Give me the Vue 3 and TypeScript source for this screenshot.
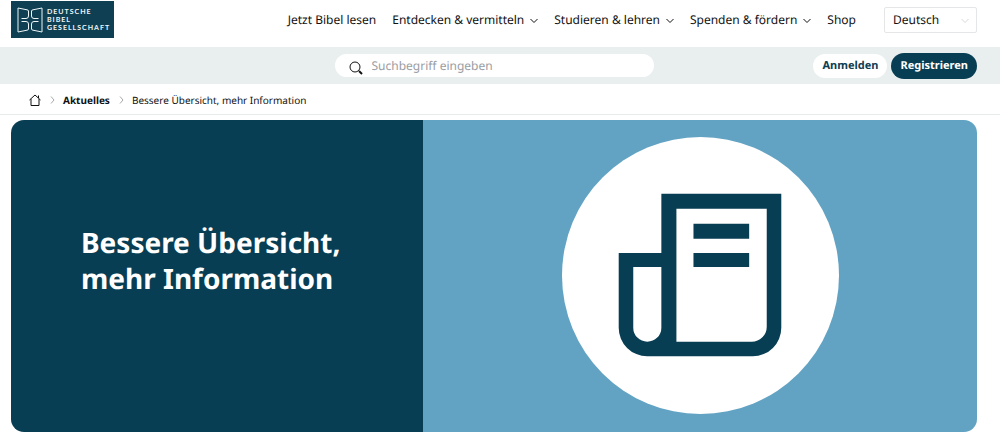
<script setup lang="ts">
import { ref } from 'vue'

interface NavItem {
  label: string
  hasMenu: boolean
}

const navItems: NavItem[] = [
  { label: 'Jetzt Bibel lesen', hasMenu: false },
  { label: 'Entdecken & vermitteln', hasMenu: true },
  { label: 'Studieren & lehren', hasMenu: true },
  { label: 'Spenden & fördern', hasMenu: true },
  { label: 'Shop', hasMenu: false },
]

const language = ref('Deutsch')
const query = ref('')
</script>

<template>
  <div class="page">
    <header class="header">
      <a href="#" class="logo">
        <svg class="logo-mark" viewBox="0 0 26 26" aria-hidden="true">
          <path d="M4.500 11.500H9q2.500 0 2.500-2.500V4q0-1-1.500-1.200L1 1v24l9-1.800q1.500-.2 1.500-1.200v-5q0-2.500-2.500-2.500H4.500" />
          <path d="M21.500 11.500H17q-2.500 0-2.500-2.500V4q0-1 1.500-1.200L25 1v24l-9-1.800q-1.500-.2-1.500-1.200v-5q0-2.500 2.500-2.500h4.500" />
        </svg>
        <span class="logo-text">
          <span>DEUTSCHE</span>
          <span>BIBEL</span>
          <span>GESELLSCHAFT</span>
        </span>
      </a>
      <nav class="nav" aria-label="Hauptnavigation">
        <template v-for="item in navItems" :key="item.label">
          <button v-if="item.hasMenu" type="button" class="nav-item">
            {{ item.label }}
            <svg class="nav-chevron" viewBox="0 0 8 6" aria-hidden="true"><path d="M.5 1 4 4.500 7.500 1" /></svg>
          </button>
          <a v-else href="#" class="nav-item">{{ item.label }}</a>
        </template>
      </nav>
      <div class="language">
        <select v-model="language" aria-label="Sprache">
          <option>Deutsch</option>
          <option>English</option>
        </select>
        <svg class="language-chevron" viewBox="0 0 8 6" aria-hidden="true"><path d="M.5 1 4 4.500 7.500 1" /></svg>
      </div>
    </header>

    <div class="toolbar">
      <form class="search" role="search" @submit.prevent>
        <svg class="search-icon" viewBox="0 0 14 14" aria-hidden="true">
          <circle cx="6" cy="6" r="5" />
          <path d="m9.500 9.500 1 1" />
          <path class="handle" d="m10 10 3 3" />
        </svg>
        <input v-model="query" type="search" placeholder="Suchbegriff eingeben" aria-label="Suchbegriff eingeben" />
      </form>
      <div class="account">
        <button type="button" class="login">Anmelden</button>
        <button type="button" class="register">Registrieren</button>
      </div>
    </div>

    <nav class="crumbs" aria-label="Brotkrumen">
      <a href="#" class="home" aria-label="Startseite">
        <svg viewBox="0 0 12 12" aria-hidden="true">
          <path d="M.5 6 6 1l5.500 5M2 5v6.500h8V5M9.500 4V1.500" />
        </svg>
      </a>
      <svg class="separator" viewBox="0 0 5 8" aria-hidden="true"><path d="m1 .5 3 3.500-3 3.500" /></svg>
      <a href="#" class="parent">Aktuelles</a>
      <svg class="separator" viewBox="0 0 5 8" aria-hidden="true"><path d="m1 .5 3 3.500-3 3.500" /></svg>
      <span aria-current="page">Bessere Übersicht, mehr Information</span>
    </nav>

    <main class="hero">
      <div class="hero-text">
        <h1>Bessere Übersicht,<br />mehr Information</h1>
      </div>
      <div class="hero-art">
        <svg viewBox="0 0 276 276" aria-hidden="true">
          <circle cx="138" cy="138" r="138" fill="#fff" />
          <path
            fill="#083e53"
            fill-rule="evenodd"
            d="M99 56.500h119.500V190a28.500 28.500 0 0 1-28.500 28.500H85A28.500 28.500 0 0 1 56.500 190V115.500H99ZM114 71.500V204h75a15 15 0 0 0 15-15V71.500ZM71 129.500V190a14 14 0 0 0 28 0v-60.500ZM131 86.500h55.500v15H131ZM131 115.500h55.500v14H131Z"
          />
        </svg>
      </div>
    </main>
  </div>
</template>

<style>
body {
  margin: 0;
  background: #fff;
}
</style>

<style scoped>
.page {
  font-family: "Noto Sans", "Open Sans", sans-serif;
  font-size: 12px;
  line-height: 16px;
  color: #111;
  text-rendering: geometricPrecision;
}

a {
  color: inherit;
  text-decoration: none;
}

button,
select,
input {
  font: inherit;
  color: inherit;
  text-rendering: inherit;
  margin: 0;
  border: 0;
  background: none;
}

button {
  cursor: pointer;
}

svg {
  display: block;
  flex: none;
  fill: none;
  stroke: currentColor;
}

.header {
  display: flex;
  align-items: flex-start;
  height: 47px;
  padding: 0 23px 0 11px;
}

.logo {
  display: flex;
  align-items: center;
  gap: 4px;
  box-sizing: border-box;
  width: 103px;
  height: 37px;
  margin-top: 1px;
  margin-right: auto;
  padding-left: 6px;
  background: #0e3f53;
  color: #eef5f7;
}

.logo-mark {
  width: 26px;
  height: 26px;
}

.logo-text {
  display: flex;
  flex-direction: column;
  font-family: Lato, sans-serif;
  font-size: 7px;
  font-weight: 700;
  line-height: 8px;
  letter-spacing: 1px;
}

.nav {
  display: flex;
  gap: 16px;
  margin-top: 12px;
}

.nav-item {
  display: flex;
  align-items: center;
  gap: 6px;
  padding: 0;
  white-space: nowrap;
}

.nav-chevron,
.language-chevron {
  width: 8px;
  height: 6px;
  margin-top: 2px;
}

.language {
  display: grid;
  align-items: center;
  box-sizing: border-box;
  width: 93px;
  height: 26px;
  margin: 7px 0 0 28px;
  border: 1px solid #e4e6e8;
  border-radius: 2px;
}

.language select {
  grid-area: 1 / 1;
  appearance: none;
  width: 100%;
  height: 24px;
  padding: 0 20px 0 8px;
}

.language-chevron {
  grid-area: 1 / 1;
  justify-self: end;
  margin-right: 7px;
  color: #d5d8da;
  pointer-events: none;
}

.toolbar {
  display: grid;
  grid-template-columns: 1fr 319px 1fr;
  align-items: center;
  height: 37px;
  padding: 0 23px 0 11px;
  background: #e9efef;
}

.search {
  grid-column: 2;
  display: flex;
  align-items: center;
  gap: 9px;
  height: 23px;
  padding: 0 14px;
  border-radius: 12px;
  background: #fff;
}

.search-icon {
  width: 14px;
  height: 14px;
  margin-top: 5px;
}

.search-icon .handle {
  stroke-width: 2;
}

.search input {
  flex: 1;
  min-width: 0;
  padding: 0;
  outline: none;
  appearance: none;
}

.search input::placeholder {
  color: #9a9da3;
  opacity: 1;
}

.account {
  display: flex;
  align-items: center;
  justify-content: flex-end;
  gap: 4px;
}

.account button {
  padding: 4px 9px;
  border-radius: 13px;
  font-size: 11px;
  font-weight: 700;
}

.account .login {
  background: #fff;
  color: #0f3e52;
}

.account .register {
  padding: 5px 9px;
  background: #083e53;
  color: #fff;
}

.crumbs {
  display: flex;
  align-items: center;
  gap: 8px;
  box-sizing: border-box;
  height: 31px;
  padding: 1px 29px 0;
  border-bottom: 1px solid #e6ebeb;
  font-size: 10px;
}

.home svg {
  width: 12px;
  height: 12px;
}

.separator {
  width: 5px;
  height: 8px;
  margin-left: 1px;
  color: #a5a8aa;
}

.parent {
  font-weight: 700;
}

.hero {
  display: grid;
  grid-template-columns: 412fr 554fr;
  margin: 5px 23px 16px 11px;
  border-radius: 13px;
  overflow: hidden;
}

.hero-text {
  display: flex;
  align-items: center;
  padding: 0 70px;
  background: #083e53;
}

.hero-text h1 {
  margin: 0 0 30px;
  color: #fff;
  font-size: 28px;
  line-height: 36px;
  font-weight: 700;
  white-space: nowrap;
}

.hero-art {
  display: flex;
  justify-content: center;
  padding: 17px 0 18px;
  background: #62a3c4;
}

.hero-art svg {
  width: 50%;
  stroke: none;
}
</style>
